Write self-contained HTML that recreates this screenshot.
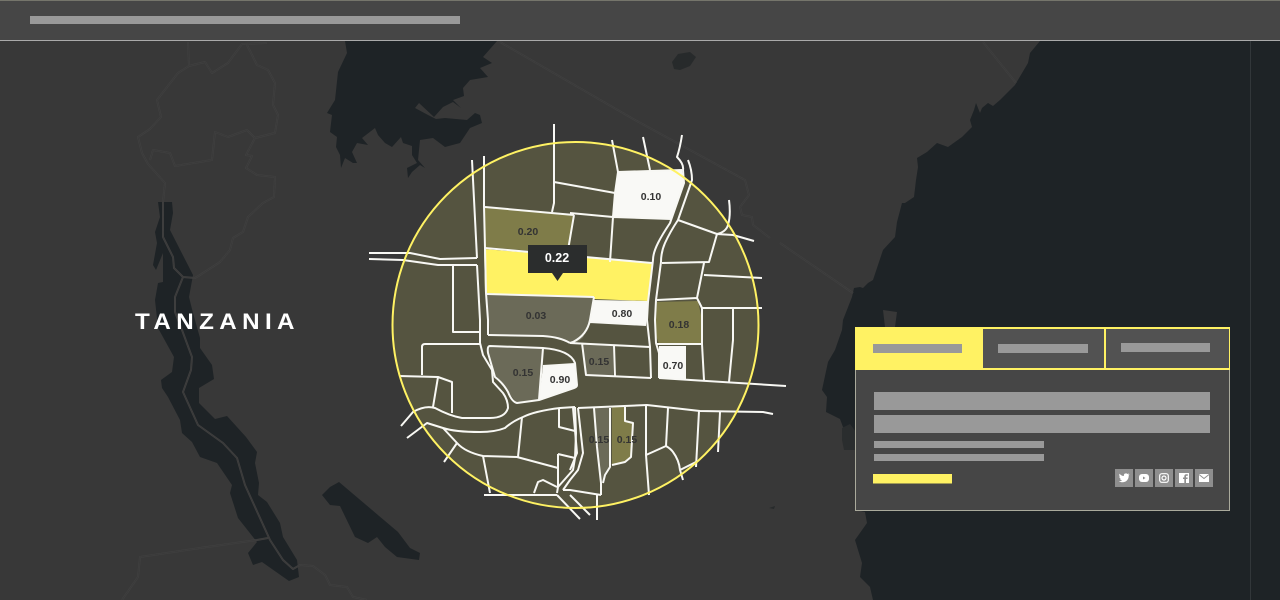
<!DOCTYPE html>
<html><head><meta charset="utf-8"><style>
html,body{margin:0;padding:0;background:#383838;width:1280px;height:600px;overflow:hidden}
svg{position:absolute;left:0;top:0;display:block}
text{font-family:"Liberation Sans",sans-serif}
.l{font-size:10.5px;font-weight:bold;fill:#333;text-anchor:middle}
.r path{fill:none;stroke:#f8f8f4;stroke-width:2;stroke-linejoin:round;stroke-linecap:butt}
.b{fill:none;stroke:#404040;stroke-width:2;stroke-linejoin:round}
.bi{fill:none;stroke:#393939;stroke-width:.7;stroke-linejoin:round}
</style></head><body>
<svg width="1280" height="600" viewBox="0 0 1280 600" xmlns="http://www.w3.org/2000/svg">
<rect width="1280" height="600" fill="#383838"/>
<g fill="#1e2326">
<path d="M1040 41L1030 53L1028 63L1015 85L1000 100L993 106L988 103L982 108L980 113L976 103L974 110L970 120L972 127L962 137L948 147L937 143L927 152L917 158L918 167L916 180L914 197L905 203L902 203L897 222L895 237L883 250L873 280L868 283L863 288L860 287L854 288L852 297L843 320L842 330L835 350L828 362L822 390L827 397L826 412L840 419L843 427L855 440L856 510L865 512L867 523L855 540L862 563L860 577L870 587L873 600L1280 600L1280 41Z"/>
<path d="M345 41L347 53L338 72L335 100L327 113L332 115L330 132L337 137L336 147L340 155L341 168L345 158L353 163L357 163L352 152L357 143L368 145L362 138L375 128L378 135L385 143L392 147L401 137L403 143L412 146L412 155L417 163L407 168L408 178L412 172L420 165L425 168L418 160L420 140L433 138L445 147L460 143L470 128L482 123L480 115L475 113L467 120L445 118L436 119L428 115L415 108L419 103L434 117L443 107L453 102L461 108L453 100L464 96L463 88L470 80L488 77L480 68L492 63L483 57L497 41Z"/>
<path d="M158 202L172 202L173 213L170 230L193 275L189 297L193 313L200 338L200 348L212 365L214 379L199 388L199 403L215 419L227 416L246 437L257 452L255 463L259 483L258 495L267 502L280 523L283 537L297 560L299 577L289 581L262 562L253 565L248 553L257 542L238 518L230 493L232 485L217 463L200 457L192 442L182 433L180 420L168 397L162 388L161 380L172 372L174 357L158 328L155 300L158 283L163 282L163 253L156 270L153 265L157 243L155 232L160 217Z"/>
<path d="M322 495L330 487L339 482L398 532L410 548L420 553L419 560L397 557L385 547L377 537L368 543L355 537L340 506L330 505Z"/>
<path d="M672 62L678 54L690 52L696 57L690 66L680 70L674 69Z" fill="#272a2b"/>
<path d="M769 508L775 506L774 509Z" fill="#272a2b"/>
</g>
<path d="M883 310L897 312L895 327L885 327Z" fill="#383838"/>
<path d="M842 428L850 424L856 432L856 450L844 450L842 440Z" fill="#2a2d2e"/>
<rect x="1250" y="41" width="1" height="559" fill="#32373a"/>
<g id="bd" class="b">
<path id="bp" d="M188 42L189 66L178 73L157 100L161 117L150 129L138 137L142 153L148 164L165 183L163 202L163 237L173 257L174 268L183 277L175 297L175 312L182 330L192 357L191 370L183 392L198 425L223 443L237 458L245 485L270 540L283 560L293 569L300 565L313 566L325 575L330 585L347 587L353 597L367 600M189 66L205 62L212 73L228 63L242 44L267 43M247 45L257 65L268 70L275 83L273 105L278 115L275 133L255 138L247 130L228 137L215 132L212 160L175 166L170 153L153 150L150 160M255 138L246 155L252 156L246 168L257 175L275 177L274 197L263 203L248 217L243 232L233 238L230 250L220 262L200 275L195 278L183 277M268 538L257 540L200 548L140 557L138 577L122 600M500 42L635 120L745 180L749 195L740 207L742 215L752 217L753 225L770 238M983 42L1016 83M780 243L853 293"/>
</g>
<use href="#bp" class="bi"/>
<rect x="0" y="0" width="1280" height="40" fill="#464646"/>
<rect x="0" y="0" width="1280" height="1" fill="#75756b"/>
<rect x="0" y="40" width="1280" height="1" fill="#aaa"/>
<rect x="30" y="16" width="430" height="8" fill="#999"/>
<text transform="translate(135,329) scale(1.1,1)" font-size="22" font-weight="bold" fill="#fff" letter-spacing="4.900">TANZANIA</text>

<circle cx="575.5" cy="325" r="183" fill="#555440"/>
<g>
<path fill="#7f7c49" d="M485 207L574 215L569 254L485 247Z"/>
<path fill="#fff263" d="M484 249L652 263L648 301L593 299L485 293Z"/>
<path fill="#6b6a58" d="M487 294L594 297L590 322L583 338L575 344L545 336L490 335Z"/>
<path fill="#f9f9f6" d="M594 301L648 302L646 325L590 322Z"/>
<path fill="#f9f9f6" d="M618 172L682 170L684 183L671 219L613 217Z"/>
<path fill="#7f7c49" d="M657 302L698 301L702 320L702 344L659 344L655 333Z"/>
<path fill="#f9f9f6" d="M659 346L685 346L685 379L659 378Z"/>
<path fill="#6b6a58" d="M490 346L543 348L539 400L517 403L508 392L495 377L488 353Z"/>
<path fill="#f9f9f6" d="M543 366L575 364L577 385Q577 387 574 388L539 400Z"/>
<path fill="#6b6a58" d="M582 343L613 346L613 376L586 375Z"/>
<path fill="#6b6a58" d="M594 408L609 408L609 467L605 475L603 483L601 483L597 447Z"/>
<path fill="#7f7c49" d="M612 407L624 407L625 421L633 423L631 457L625 462L612 465Z"/>
</g>
<g class="r">
<path d="M554 124L554 203L552 212M484 156L484 206L485 248L486 293L488 320L488 335"/>
<path d="M472 160L477 258M477 265L480 320L480 343L483 355L492 370L493 382L503 393Q508 400 508 408Q505 418 490 418L462 418Q450 416 435 408Q425 405 413 412L401 426"/>
<path d="M369 253L410 253L440 259L477 258M369 259L403 260L438 265L477 265"/>
<path d="M453 265L453 332L480 332"/>
<path d="M485 207L574 215M554 182L615 193M612 140L618 172L615 193L613 217L610 262M643 137L650 170M618 172L682 170M570 213L613 217L671 219M574 215L568 250"/>
<path d="M485 248L652 263M487 294L594 297M594 301L648 302"/>
<path d="M682 135Q680 148 677 157Q684 164 683 170L684 183L670 223Q662 235 658 243Q653 253 653 260L648 302L647 320L650 347L651 378"/>
<path d="M688 160Q692 170 692 180L685 200L678 220Q670 232 665 243Q661 252 661 262L656 300L655 320L656 343L659 353L659 378"/>
<path d="M678 220L717 234Q726 232 728 225Q731 215 729 200M717 234L733 235L754 241M717 234L709 262L662 263M704 263L697 298L657 300M704 275L762 278M697 298L702 308L702 344L704 380M702 308L762 308M733 308L733 340L729 382"/>
<path d="M659 378L786 386M657 344L702 344M685 346L685 379"/>
<path d="M570 343L650 347M582 343L586 375L651 378M614 345L615 377M590 322L646 325M594 297L590 320Q587 335 573 342L570 343"/>
<path d="M488 335L543 336Q560 337 570 343"/>
<path d="M490 346L543 348Q570 350 575 363L577 385Q577 387 574 388L539 400L517 403Q512 402 508 392Q503 383 495 377L488 353Q487 346 490 346ZM543 348L539 400M543 366L575 364"/>
<path d="M575 407L560 408Q535 411 523 417Q513 421 505 428Q495 432 480 432Q455 432 443 428L427 423L407 438"/>
<path d="M422 375L422 347Q422 344 425 344L480 344M399 376L438 377L452 382L452 413M438 377L433 407"/>
<path d="M443 428L457 443Q465 452 483 456L517 457L558 468M457 443L444 462M483 456L490 493M484 495L557 495"/>
<path d="M522 417L518 457M559 408L559 427L575 431M575 407L576 433L575 458L573 470L558 487L557 493M558 454L575 458M558 454L558 487"/>
<path d="M534 493L538 482L543 480L557 487M557 495L580 519M563 490L570 490L601 495M597 495L597 520M570 495L590 515"/>
<path d="M578 408L647 405L700 411L763 412L773 414M578 408L583 453L578 470L570 480L563 490M573 408L577 453L570 470"/>
<path d="M594 408L597 447L601 483L601 495M610 408L610 467L605 475L603 483M625 407L625 421L633 423L631 457L625 462L612 465"/>
<path d="M646 406L646 455L649 495M646 455L666 446Q671 449 673 452Q679 460 680 470L683 480M668 408L666 446M680 470L696 462M699 411L696 467M720 412L718 452"/>
</g>
<circle cx="575.5" cy="325" r="183" fill="none" stroke="#fff263" stroke-width="2"/>
<text class="l" x="528" y="235">0.20</text>
<text class="l" x="536" y="319">0.03</text>
<text class="l" x="622" y="317">0.80</text>
<text class="l" x="651" y="200">0.10</text>
<text class="l" x="679" y="328">0.18</text>
<text class="l" x="673" y="369">0.70</text>
<text class="l" x="523" y="376">0.15</text>
<text class="l" x="560" y="383">0.90</text>
<text class="l" x="599" y="365">0.15</text>
<text class="l" x="599" y="443">0.15</text>
<text class="l" x="627" y="443">0.15</text>
<path d="M528 245H587V273H563L557.500 281L552 273H528Z" fill="#2b2d2d"/>
<text x="557" y="262" font-size="12.500" font-weight="bold" fill="#fff" text-anchor="middle">0.22</text>

<rect x="855.500" y="340.500" width="374" height="170" fill="#464646" stroke="#aaaa9c"/>
<rect x="855" y="327" width="375" height="43" fill="#fff263"/>
<rect x="983" y="329" width="121" height="39" fill="#525252"/>
<rect x="1106" y="329" width="123" height="39" fill="#525252"/>
<rect x="873" y="344" width="89" height="9" fill="#999"/>
<rect x="998" y="344" width="90" height="9" fill="#999"/>
<rect x="1121" y="343" width="89" height="9" fill="#999"/>
<rect x="874" y="392" width="336" height="18" fill="#999"/>
<rect x="874" y="415" width="336" height="18" fill="#999"/>
<rect x="874" y="441" width="170" height="7" fill="#999"/>
<rect x="874" y="454" width="170" height="7" fill="#999"/>
<rect x="873" y="474" width="79" height="9.500" fill="#fff263"/>
<g fill="#8e8e8e">
<rect x="1115" y="469" width="18" height="18"/>
<rect x="1135" y="469" width="18" height="18"/>
<rect x="1155" y="469" width="18" height="18"/>
<rect x="1175" y="469" width="18" height="18"/>
<rect x="1195" y="469" width="18" height="18"/>
</g>
<path fill="#fff" d="M1129.500 474.200C1129 474.500 1128.500 474.600 1128 474.700C1128.500 474.400 1128.900 473.900 1129.100 473.400C1128.600 473.700 1128.100 473.900 1127.500 474C1126.500 473 1124.500 473.300 1124 474.600C1123.800 475.100 1123.800 475.600 1123.900 476C1122.200 475.900 1120.600 475.100 1119.500 473.700C1119 474.700 1119.200 476 1120.200 476.700C1119.800 476.700 1119.500 476.600 1119.200 476.400C1119.200 477.500 1120 478.500 1121 478.700C1120.700 478.800 1120.300 478.800 1120 478.700C1120.300 479.600 1121.100 480.200 1122.100 480.200C1121.100 481 1120 481.300 1118.800 481.200C1123.500 484 1129 481 1128.700 475.500C1129 475.200 1129.300 474.800 1129.500 474.200Z"/>
<rect x="1139" y="474" width="10" height="8" rx="3" fill="#fff"/>
<path d="M1143 476.500L1145.500 478L1143 479.500Z" fill="#8e8e8e"/>
<rect x="1159.700" y="473.700" width="8.600" height="8.600" rx="2.200" fill="none" stroke="#fff" stroke-width="1.200"/>
<circle cx="1164" cy="478" r="2" fill="none" stroke="#fff" stroke-width="1.200"/>
<path fill="#fff" d="M1179 473H1189V483H1186V479H1187.500L1187.700 477.500H1186V476.500C1186 476 1186.300 475.800 1186.800 475.800H1187.800V474.300H1186.300C1185 474.300 1184.300 475.200 1184.300 476.300V477.500H1183V479H1184.300V483H1179Z"/>
<rect x="1199" y="474" width="10" height="8" fill="#fff"/>
<path d="M1199 474.500L1204 478.500L1209 474.500" fill="none" stroke="#8e8e8e" stroke-width=".9"/>
</svg>
</body></html>
